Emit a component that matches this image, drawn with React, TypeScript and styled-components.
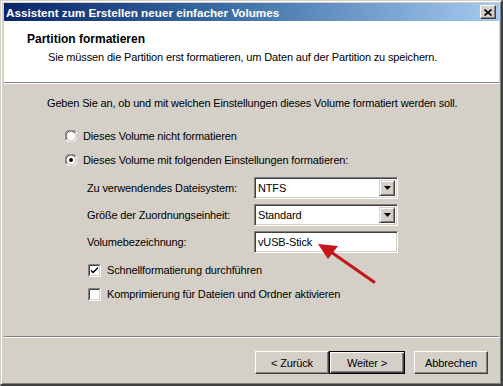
import { createGlobalStyle, styled } from 'styled-components';

const GlobalStyle = createGlobalStyle`
  html, body {
    margin: 0;
    padding: 0;
    background: #d4d0c8;
  }
  body {
    font-family: "Liberation Sans", Arial, sans-serif;
    font-size: 11px;
    letter-spacing: -0.15px;
    color: #000;
  }
`;

const Window = styled.div`
  position: relative;
  box-sizing: border-box;
  width: 503px;
  height: 386px;
  display: flex;
  flex-direction: column;
  background: #d4d0c8;
  border-style: solid;
  border-width: 1px 2px 2px 1px;
  border-color: #d4d0c8 #404040 #404040 #d4d0c8;
  box-shadow: inset 1px 1px 0 #fff, inset -1px -1px 0 #808080;
  padding: 2px 2px 2px 3px;
  white-space: nowrap;
`;

const TitleBar = styled.div`
  height: 18px;
  display: flex;
  align-items: center;
  justify-content: space-between;
  padding: 0 3px 0 2px;
  background: linear-gradient(to right, #0a246a 0%, #3a6ea5 45%, #a6caf0 100%);
`;

const Title = styled.span`
  color: #fff;
  font-weight: bold;
  font-size: 11.7px;
  letter-spacing: 0;
`;

const CloseButton = styled.div`
  box-sizing: border-box;
  width: 16px;
  height: 14px;
  background: #d4d0c8;
  border-style: solid;
  border-width: 1px;
  border-color: #fff #404040 #404040 #fff;
  box-shadow: inset -1px -1px 0 #808080;
  display: flex;
  align-items: center;
  justify-content: center;
`;

const Header = styled.div`
  height: 61px;
  background: #fff;
  padding: 10px 0 0 23px;
  box-sizing: border-box;
`;

const HeaderTitle = styled.div`
  font-weight: bold;
  font-size: 12px;
  letter-spacing: 0;
  line-height: 16px;
`;

const HeaderText = styled.div`
  margin: 2px 0 0 21px;
  line-height: 16px;
`;

const Separator = styled.div<{ $top?: number }>`
  margin-top: ${p => p.$top ?? 0}px;
  border-top: 1px solid #808080;
  border-bottom: 1px solid #fff;
`;

const Body = styled.div`
  display: flex;
  flex-direction: column;
  padding: 11px 0 0 43px;
`;

const Line = styled.div<{ $top?: number; $indent?: number }>`
  display: flex;
  align-items: center;
  height: 16px;
  margin-top: ${p => p.$top ?? 0}px;
  margin-left: ${p => p.$indent ?? 0}px;
  gap: 6px;
`;

const FieldRow = styled.div<{ $top?: number }>`
  display: grid;
  grid-template-columns: 167px 144px;
  align-items: center;
  height: 22px;
  margin-top: ${p => p.$top ?? 0}px;
  margin-left: 40px;
`;

const Sunken = styled.div`
  box-sizing: border-box;
  height: 22px;
  background: #fff;
  border-style: solid;
  border-width: 1px;
  border-color: #808080 #fff #fff #808080;
  box-shadow: inset 1px 1px 0 #404040, inset -1px -1px 0 #d4d0c8;
  display: flex;
  align-items: center;
  padding: 0 2px 0 3px;
  justify-content: space-between;
`;

const DropButton = styled.div`
  box-sizing: border-box;
  width: 16px;
  height: 16px;
  background: #d4d0c8;
  border-style: solid;
  border-width: 1px;
  border-color: #d4d0c8 #404040 #404040 #d4d0c8;
  box-shadow: inset 1px 1px 0 #fff, inset -1px -1px 0 #808080;
  display: flex;
  align-items: center;
  justify-content: center;
`;

const Footer = styled.div`
  display: flex;
  justify-content: flex-end;
  padding: 13px 11px 0 0;
`;

const Button = styled.div<{ $default?: boolean; $gap?: number }>`
  box-sizing: border-box;
  width: ${p => (p.$default ? 76 : 74)}px;
  height: 23px;
  margin-left: ${p => p.$gap ?? 0}px;
  display: flex;
  align-items: center;
  justify-content: center;
  background: #d4d0c8;
  border-style: solid;
  border-width: 1px;
  border-color: ${p => (p.$default ? '#000' : '#fff #404040 #404040 #fff')};
  box-shadow: ${p =>
    p.$default
      ? 'inset 1px 1px 0 #fff, inset -1px -1px 0 #404040, inset -2px -2px 0 #808080'
      : 'inset -1px -1px 0 #808080'};
`;

const Arrow = styled.svg`
  position: absolute;
  left: 310px;
  top: 236px;
`;

function Radio({ checked }: { checked?: boolean }) {
  return (
    <svg width="12" height="12" viewBox="0 0 12 12">
      <path d="M11 2 A5.5 5.5 0 0 0 1 10" fill="none" stroke="#808080" strokeWidth="1" />
      <path d="M10 3 A4.5 4.5 0 0 0 2 9" fill="none" stroke="#404040" strokeWidth="1" />
      <circle cx="6" cy="6" r="4.2" fill="#fff" />
      <path d="M1 10 A5.5 5.5 0 0 0 11 2" fill="none" stroke="#fff" strokeWidth="1" />
      {checked && <circle cx="6" cy="6" r="2" fill="#000" />}
    </svg>
  );
}

function Check({ checked }: { checked?: boolean }) {
  return (
    <svg width="13" height="13" viewBox="0 0 13 13">
      <rect x="0" y="0" width="13" height="13" fill="#fff" />
      <path d="M0.5 12.5 V0.5 H12.5" fill="none" stroke="#808080" />
      <path d="M1.5 11.5 V1.5 H11.5" fill="none" stroke="#404040" />
      <path d="M1.5 12.5 H12.5 V0.5" fill="none" stroke="#fff" />
      <path d="M2.5 11.5 H11.5 V1.5" fill="none" stroke="#d4d0c8" />
      {checked && <path d="M3 5.5 L5 7.5 L10 2.8 V4.8 L5 9.5 L3 7.5 Z" fill="#000" />}
    </svg>
  );
}

function Combo({ value }: { value: string }) {
  return (
    <Sunken>
      <span>{value}</span>
      <DropButton>
        <svg width="7" height="4" viewBox="0 0 7 4">
          <path d="M0 0 H7 L3.5 4 Z" fill="#000" />
        </svg>
      </DropButton>
    </Sunken>
  );
}

export default function App() {
  return (
    <>
      <GlobalStyle />
      <Window>
        <TitleBar>
          <Title>Assistent zum Erstellen neuer einfacher Volumes</Title>
          <CloseButton>
            <svg width="8" height="7" viewBox="0 0 8 7">
              <path d="M0.5 0.5 L7.5 6.5 M7.5 0.5 L0.5 6.5" stroke="#000" strokeWidth="1.6" />
            </svg>
          </CloseButton>
        </TitleBar>
        <Header>
          <HeaderTitle>Partition formatieren</HeaderTitle>
          <HeaderText>
            Sie müssen die Partition erst formatieren, um Daten auf der Partition zu speichern.
          </HeaderText>
        </Header>
        <Separator />
        <Body>
          <Line>Geben Sie an, ob und mit welchen Einstellungen dieses Volume formatiert werden soll.</Line>
          <Line $top={17} $indent={18}>
            <Radio />
            Dieses Volume nicht formatieren
          </Line>
          <Line $top={8} $indent={18}>
            <Radio checked />
            Dieses Volume mit folgenden Einstellungen formatieren:
          </Line>
          <FieldRow $top={9}>
            <span>Zu verwendendes Dateisystem:</span>
            <Combo value="NTFS" />
          </FieldRow>
          <FieldRow $top={5}>
            <span>Größe der Zuordnungseinheit:</span>
            <Combo value="Standard" />
          </FieldRow>
          <FieldRow $top={5}>
            <span>Volumebezeichnung:</span>
            <Sunken>vUSB-Stick</Sunken>
          </FieldRow>
          <Line $top={9} $indent={41}>
            <Check checked />
            Schnellformatierung durchführen
          </Line>
          <Line $top={8} $indent={41}>
            <Check />
            Komprimierung für Dateien und Ordner aktivieren
          </Line>
        </Body>
        <Separator $top={34} />
        <Footer>
          <Button>&lt; Zurück</Button>
          <Button $default>Weiter &gt;</Button>
          <Button $gap={9}>Abbrechen</Button>
        </Footer>
        <Arrow width="70" height="52" viewBox="0 0 70 52">
          <path d="M63 45 L20 15" stroke="#c4161c" strokeWidth="3" strokeLinecap="round" />
          <path d="M7 7 L27 9 L17 22 Z" fill="#c4161c" />
        </Arrow>
      </Window>
    </>
  );
}
